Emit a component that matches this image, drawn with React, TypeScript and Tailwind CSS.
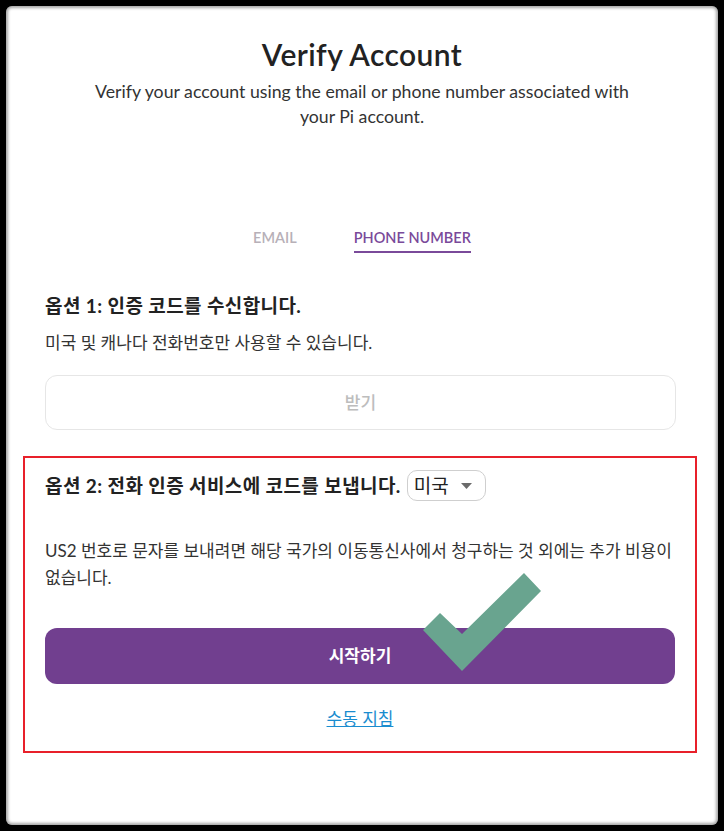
import React from "react";

export default function App() {
  const font = { fontFamily: "Lato, 'Noto Sans CJK KR', sans-serif" };
  return (
    <div className="relative w-[724px] h-[831px] bg-black p-[6px]" style={font}>
      <div className="h-full bg-white rounded-[6px] shadow-[inset_0_0_3px_2px_rgba(0,0,0,0.35)] flex flex-col">
        <h1 className="pt-[30px] text-center text-[30px] leading-[36px] tracking-[0.4px] font-semibold text-[#222]">
          Verify Account
        </h1>
        <p className="mt-[7px] mx-auto max-w-[548px] text-center text-[17.7px] leading-[25px] text-[#333]">
          Verify your account using the email or phone number associated with your Pi account.
        </p>

        <div className="mt-[99px] flex justify-center gap-[57px] text-[14.5px] leading-[20px] font-semibold">
          <div className="pb-[3px] text-[#b7b0b8]">EMAIL</div>
          <div className="pb-[3px] text-[#7a4a9a] border-b-2 border-[#7a4a9a]">PHONE NUMBER</div>
        </div>

        <div className="pl-[39px] pr-[42px]">
          <h2 className="mt-[40px] text-[19px] leading-[26px] tracking-[0.4px] font-bold text-[#222]">
            옵션 1: 인증 코드를 수신합니다.
          </h2>
          <p className="mt-[12px] text-[17px] leading-[24px] text-[#333]">
            미국 및 캐나다 전화번호만 사용할 수 있습니다.
          </p>
          <button className="mt-[20px] w-full h-[55px] rounded-[12px] border border-[#e6e6e6] text-[17px] font-medium text-[#bdbdbd]">
            받기
          </button>
        </div>

        <div className="mt-[26px] ml-[17px] w-[674px] border-2 border-[#e8202a] px-[20px] pt-[12px] pb-[20px]">
          <div className="flex items-center gap-[6px]">
            <h2 className="text-[19px] leading-[26px] tracking-[0.4px] font-bold text-[#222]">
              옵션 2: 전화 인증 서비스에 코드를 보냅니다.
            </h2>
            <div className="h-[31px] flex items-center gap-[12px] border border-[#cfcfcf] rounded-[10px] pl-[6px] pr-[13px]">
              <span className="text-[19px] leading-[24px] text-[#222]">미국</span>
              <svg width="11" height="6" viewBox="0 0 11 6">
                <polygon points="0,0 11,0 5.5,6" fill="#6b6b6b" />
              </svg>
            </div>
          </div>
          <p className="mt-[36px] text-[17px] leading-[27px] text-[#333]">
            US2 번호로 문자를 보내려면 해당 국가의 이동통신사에서 청구하는 것 외에는 추가 비용이 없습니다.
          </p>
          <button className="mt-[37px] w-full h-[56px] rounded-[12px] bg-[#713f8f] text-white text-[17px] font-bold">
            시작하기
          </button>
          <div className="mt-[23px] text-center">
            <a className="text-[17px] leading-[24px] text-[#1a8ccf] underline">수동 지침</a>
          </div>
        </div>
      </div>

      <svg
        className="absolute left-0 top-0 pointer-events-none"
        width="724"
        height="831"
        viewBox="0 0 724 831"
      >
        <polygon
          points="440,613 462,634 524,573 541,591 462,671 423,630"
          fill="#69a48f"
        />
      </svg>
    </div>
  );
}
